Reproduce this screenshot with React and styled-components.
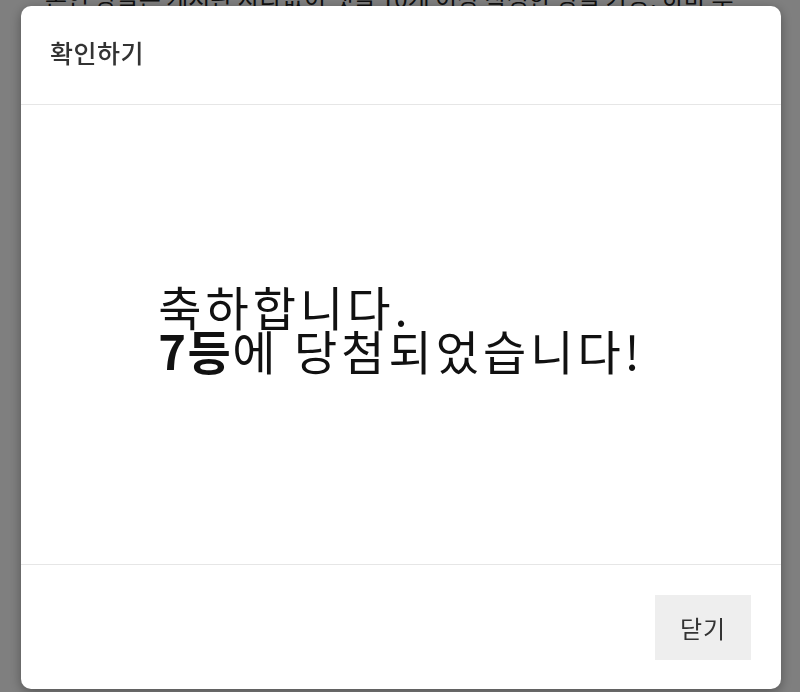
import React from "react";
import styled, { createGlobalStyle } from "styled-components";

const GlobalStyle = createGlobalStyle`
  html, body {
    margin: 0;
    padding: 0;
    width: 800px;
    height: 692px;
    overflow: hidden;
    background: #ffffff;
    font-family: "Noto Sans CJK KR", "Noto Sans", sans-serif;
  }
`;

const Page = styled.div`
  padding: 0 45px;
  margin-top: -20px;
  color: #222;
  font-size: 24px;
  line-height: 36px;

  & p {
    margin: 0 0 300px;
    white-space: nowrap;
  }
`;

const Overlay = styled.div`
  position: fixed;
  inset: 0;
  background: rgba(0, 0, 0, 0.5);
  display: flex;
  justify-content: center;
  align-items: flex-start;
  padding: 6px 0 0 2px;
`;

const Modal = styled.div`
  width: 760px;
  height: 683px;
  background: #fff;
  border-radius: 10px;
  box-shadow: 0 3px 12px rgba(0, 0, 0, 0.35);
  display: flex;
  flex-direction: column;
  overflow: hidden;
`;

const Header = styled.header`
  height: 99px;
  flex-shrink: 0;
  display: flex;
  align-items: center;
  padding: 0 29px 7px;
  box-sizing: border-box;
  border-bottom: 1px solid #e6e6e6;

  & h2 {
    margin: 0;
    font-size: 25px;
    font-weight: 500;
    color: #333;
    letter-spacing: 0.5px;
  }
`;

const Body = styled.section`
  flex: 1;
  display: flex;
  align-items: center;
  justify-content: center;
  padding-bottom: 14px;
`;

const Message = styled.div`
  font-size: 47px;
  line-height: 44px;
  color: #111;
  font-weight: 400;
  letter-spacing: 4px;

  & b {
    font-weight: 700;
    letter-spacing: 1.5px;
  }
`;

const Footer = styled.footer`
  height: 125px;
  flex-shrink: 0;
  border-top: 1px solid #e6e6e6;
  display: flex;
  align-items: center;
  justify-content: flex-end;
  padding: 0 30px;
  box-sizing: border-box;
`;

const CloseButton = styled.button`
  width: 96px;
  height: 65px;
  border: none;
  background: #eeeeee;
  color: #333;
  font-family: inherit;
  font-size: 24px;
  letter-spacing: 1px;
  cursor: pointer;
`;

export default function App() {
  return (
    <>
      <GlobalStyle />
      <Page>
        <p>본인 방글은 게시판 사라없이 댓글 10개 이상 작성한 방글 가능, 하마 부</p>
        <p>이벤트 참여 안내</p>
      </Page>
      <Overlay>
        <Modal>
          <Header>
            <h2>확인하기</h2>
          </Header>
          <Body>
            <Message>
              축하합니다.
              <br />
              <b>7등</b>에 당첨되었습니다!
            </Message>
          </Body>
          <Footer>
            <CloseButton>닫기</CloseButton>
          </Footer>
        </Modal>
      </Overlay>
    </>
  );
}
